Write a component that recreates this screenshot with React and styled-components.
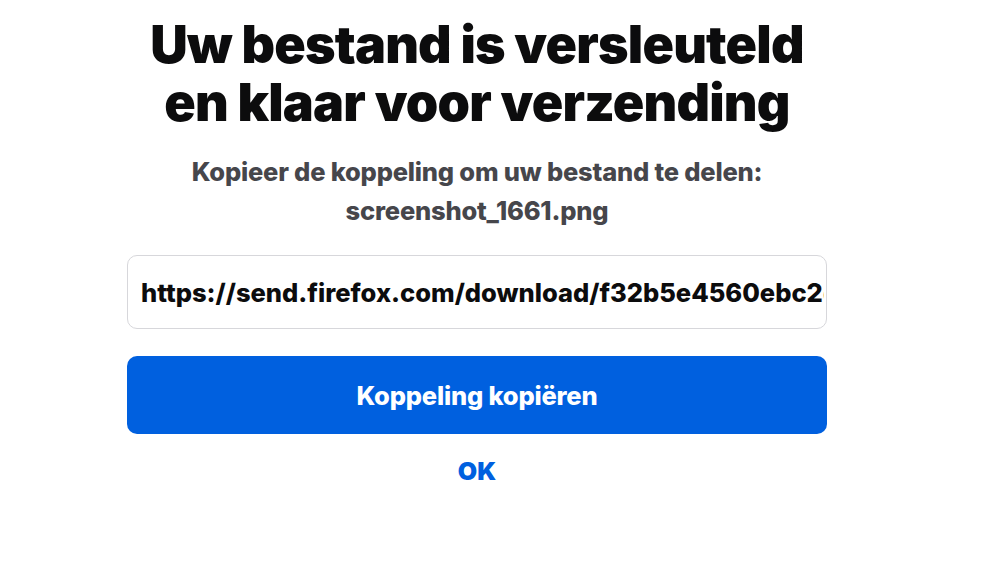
import styled, { createGlobalStyle } from 'styled-components';

const GlobalStyle = createGlobalStyle`
  html, body {
    margin: 0;
    padding: 0;
    background: #ffffff;
    font-family: Inter, "Liberation Sans", sans-serif;
  }
`;

export default function App() {
  return (
    <>
      <GlobalStyle />
      <Page>
        <Title>
          Uw bestand is versleuteld
          <br />
          en klaar voor verzending
        </Title>
        <Subtitle>
          Kopieer de koppeling om uw bestand te delen:
          <br />
          screenshot_1661.png
        </Subtitle>
        <LinkInput
          readOnly
          value="https://send.firefox.com/download/f32b5e4560ebc2d1/#Xk3pA7qLm"
        />
        <CopyButton>Koppeling kopiëren</CopyButton>
        <OkLink>OK</OkLink>
      </Page>
    </>
  );
}

const Page = styled.main`
  width: 954px;
  display: flex;
  flex-direction: column;
  align-items: center;
  padding-top: 16px;
`;

const Title = styled.h1`
  margin: 0;
  font-size: 52px;
  line-height: 58px;
  font-weight: 900;
  letter-spacing: -0.8px;
  color: #0c0c0d;
  text-align: center;
`;

const Subtitle = styled.p`
  margin: 20px 0 0;
  font-size: 25.5px;
  line-height: 39px;
  font-weight: 800;
  letter-spacing: -0.2px;
  color: #46464b;
  text-align: center;
`;

const LinkInput = styled.input`
  box-sizing: border-box;
  width: 700px;
  height: 74px;
  margin-top: 25px;
  padding: 0 2px 0 13px;
  border: 1px solid #d7d7db;
  border-radius: 10px;
  font-family: Inter, "Liberation Sans", sans-serif;
  font-size: 25.5px;
  font-weight: 800;
  color: #0c0c0d;
  outline: none;
`;

const CopyButton = styled.button`
  width: 700px;
  height: 78px;
  margin-top: 27px;
  border: none;
  border-radius: 10px;
  background: #0060df;
  color: #ffffff;
  font-family: Inter, "Liberation Sans", sans-serif;
  font-size: 25.5px;
  font-weight: 800;
  letter-spacing: -0.2px;
  cursor: pointer;
`;

const OkLink = styled.a`
  margin-top: 22px;
  font-size: 25px;
  font-weight: 900;
  color: #0060df;
  cursor: pointer;
`;
